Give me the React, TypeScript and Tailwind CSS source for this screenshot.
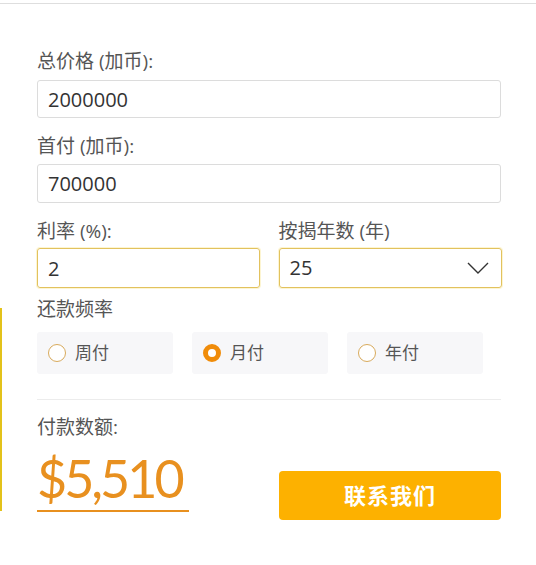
import { useState } from "react";

const font = { fontFamily: '"Open Sans", "Noto Sans CJK SC", sans-serif' };

function Radio({ label, checked, onClick }: { label: string; checked: boolean; onClick: () => void }) {
  return (
    <button
      onClick={onClick}
      className="flex h-[42px] w-[136px] items-center gap-[9px] rounded-[3px] bg-[#f7f7f9] pl-[11px] text-[17px] text-[#555]"
    >
      {checked ? (
        <span className="h-[18px] w-[18px] rounded-full border-[5px] border-[#f08c0a] bg-white" />
      ) : (
        <span className="h-[18px] w-[18px] rounded-full border border-[#d8aa5c] bg-white" />
      )}
      {label}
    </button>
  );
}

export default function App() {
  const [freq, setFreq] = useState("月付");

  return (
    <div className="flex min-h-[565px] w-[536px] flex-col bg-white" style={font}>
      <div className="mt-[3px] h-px w-full bg-[#dedede]" />
      <div className="flex flex-1">
        {/* left edge strip */}
        <div className="w-[2px]">
          <div className="mt-[304px] h-[203px] w-[2px] bg-[#e3c21a]" />
        </div>

        <div className="ml-[35px] w-[464px] pt-[45px]">
          <label className="block text-[19px] leading-[24px] text-[#555]">总价格 (加币):</label>
          <input
            defaultValue="2000000"
            className="mt-[7px] block h-[38px] w-full rounded-[3px] border border-[#dcdcdc] px-[10px] text-[20px] text-[#333] outline-none"
          />

          <label className="mt-[16px] block text-[19px] leading-[24px] text-[#555]">首付 (加币):</label>
          <input
            defaultValue="700000"
            className="mt-[6px] block h-[39px] w-full rounded-[3px] border border-[#dcdcdc] px-[10px] text-[20px] text-[#333] outline-none"
          />

          <div className="mt-[16px] grid grid-cols-2 gap-x-[19px]">
            <div>
              <label className="block text-[19px] leading-[24px] text-[#555]">利率 (%):</label>
              <input
                defaultValue="2"
                className="mt-[5px] block h-[40px] w-[223px] rounded-[3px] border border-[#e2c25e] px-[10px] text-[20px] text-[#333] shadow-[0_0_0_1px_#fdf5d2] outline-none"
              />
            </div>
            <div>
              <label className="block text-[19px] leading-[24px] text-[#555]">按揭年数 (年)</label>
              <div className="mt-[5px] flex h-[40px] w-[223px] items-center justify-between rounded-[3px] border border-[#e2c25e] pl-[10px] pr-[12px] text-[20px] text-[#333] shadow-[0_0_0_1px_#fdf5d2]">
                <span>25</span>
                <svg width="22" height="12" viewBox="0 0 22 12" fill="none">
                  <polyline points="1,1 11,11 21,1" stroke="#333" strokeWidth="1.4" />
                </svg>
              </div>
            </div>
          </div>

          <label className="mt-[9px] block text-[19px] leading-[24px] text-[#555]">还款频率</label>
          <div className="mt-[11px] flex gap-[19px]">
            {["周付", "月付", "年付"].map((f) => (
              <Radio key={f} label={f} checked={freq === f} onClick={() => setFreq(f)} />
            ))}
          </div>

          <div className="mt-[25px] h-px w-full bg-[#ececec]" />

          <label className="mt-[15px] block text-[19px] leading-[24px] text-[#555]">付款数额:</label>

          <div className="flex items-start justify-between">
            <div
              className="mt-[10px] border-b-2 border-[#e8901f] pb-[3px] pr-[7px] text-[52px] leading-[58px] tracking-[-3px] text-[#e8901f]"
              style={{ fontFamily: "Lato, sans-serif" }}
            >
              $5,510
            </div>
            <button className="mt-[32px] h-[49px] w-[222px] rounded-[4px] bg-[#fdb100] text-[22px] font-bold tracking-[1px] text-white">
              联系我们
            </button>
          </div>
        </div>
      </div>
    </div>
  );
}
